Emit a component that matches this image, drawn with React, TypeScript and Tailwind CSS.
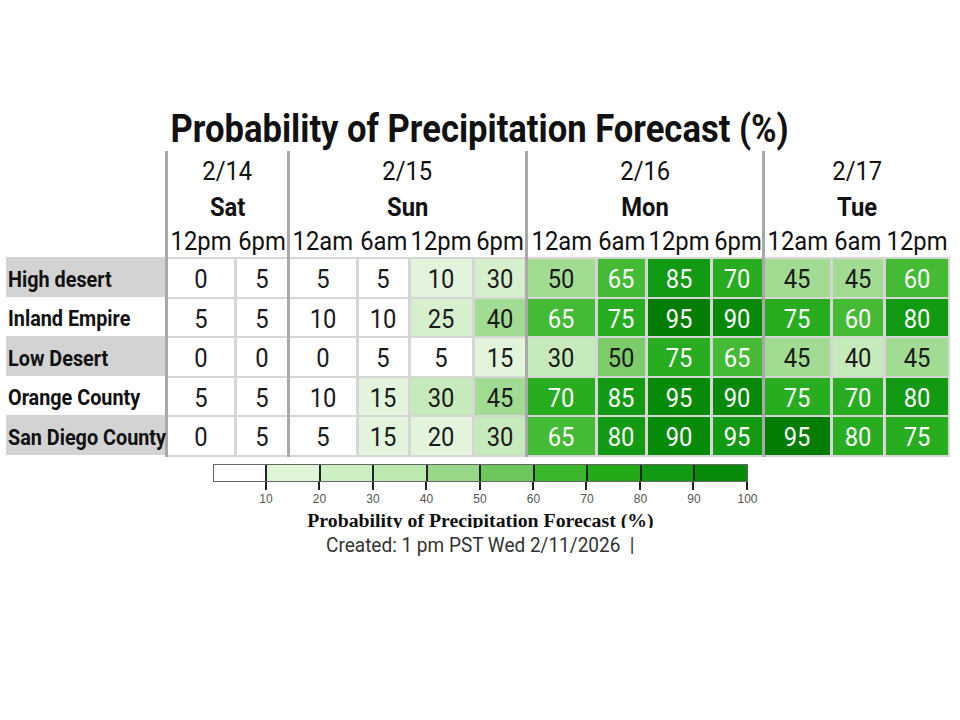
import React from "react";

const groups = [
  {
    date: "2/14",
    day: "Sat",
    cols: [
      { t: "12pm", w: "w-[66px]" },
      { t: "6pm", w: "w-[50px]" },
    ],
  },
  {
    date: "2/15",
    day: "Sun",
    cols: [
      { t: "12am", w: "w-[66px]" },
      { t: "6am", w: "w-[49px]" },
      { t: "12pm", w: "w-[61px]" },
      { t: "6pm", w: "w-[50px]" },
    ],
  },
  {
    date: "2/16",
    day: "Mon",
    cols: [
      { t: "12am", w: "w-[67px]" },
      { t: "6am", w: "w-[47px]" },
      { t: "12pm", w: "w-[62px]" },
      { t: "6pm", w: "w-[49px]" },
    ],
  },
  {
    date: "2/17",
    day: "Tue",
    cols: [
      { t: "12am", w: "w-[65px]" },
      { t: "6am", w: "w-[50px]" },
      { t: "12pm", w: "w-[62px]" },
    ],
  },
];

// shade keys -> cell colours
const shade: Record<string, string> = {
  w: "bg-white text-[#1a1a1a]",
  a: "bg-[#e2f5dc] text-[#1a1a1a]",
  b: "bg-[#d6f0ce] text-[#1a1a1a]",
  c: "bg-[#c6eabb] text-[#1a1a1a]",
  d: "bg-[#a2dc93] text-[#1a1a1a]",
  e: "bg-[#7ccd6a] text-[#1a1a1a]",
  f: "bg-[#44ba35] text-white",
  g: "bg-[#27ad1f] text-white",
  h: "bg-[#129a12] text-white",
  i: "bg-[#078a07] text-white",
  j: "bg-[#037d03] text-white",
};

const rows = [
  { name: "High desert", gray: true, v: ["0w 5w", "5w 5w 10a 30b", "50d 65f 85h 70g", "45d 45d 60f"] },
  { name: "Inland Empire", gray: false, v: ["5w 5w", "10w 10w 25b 40d", "65f 75g 95j 90i", "75g 60f 80h"] },
  { name: "Low Desert", gray: true, v: ["0w 0w", "0w 5w 5w 15a", "30c 50e 75g 65f", "45d 40c 45d"] },
  { name: "Orange County", gray: false, v: ["5w 5w", "10w 15a 30c 45d", "70g 85h 95i 90i", "75g 70g 80h"] },
  { name: "San Diego County", gray: true, v: ["0w 5w", "5w 15a 20a 30c", "65f 80h 90i 95h", "95j 80g 75g"] },
];

const bar = [
  "bg-white",
  "bg-[#dff5d8]",
  "bg-[#cdeec3]",
  "bg-[#bde8b0]",
  "bg-[#97d888]",
  "bg-[#6cc85a]",
  "bg-[#3cb72c]",
  "bg-[#22aa18]",
  "bg-[#129a12]",
  "bg-[#078a07]",
];

const sx = "inline-block scale-x-[0.95]";

export default function App() {
  return (
    <div className="w-[960px] h-[720px] bg-white font-[Roboto,sans-serif] text-[#111]">
      <div className="pt-[107px] text-center">
        <span className="inline-block scale-x-[0.91] text-[38px] font-bold leading-[44px]">
          Probability of Precipitation Forecast (%)
        </span>
      </div>

      <div className="flex pl-[6px]">
        {/* row labels */}
        <div className="w-[159px] flex flex-col">
          <div className="h-[106px]" />
          {rows.map((r) => (
            <div
              key={r.name}
              className={`h-[39.5px] flex items-center pl-[2px] pt-[6px] ${r.gray ? "bg-[#d3d3d3]" : "bg-white"}`}
            >
              <span className="inline-block scale-x-[0.9] origin-left whitespace-nowrap text-[22px] font-bold leading-none">
                {r.name}
              </span>
            </div>
          ))}
        </div>

        {groups.map((g, gi) => (
          <div key={g.date} className="flex">
            <div className="w-[3px] bg-[#a9a9a9]" />
            <div className="flex flex-col">
              <div className="h-[40px] flex items-center justify-center text-[25px] leading-none">
                <span className={sx}>{g.date}</span>
              </div>
              <div className="h-[33px] flex items-center justify-center text-[25px] font-bold leading-none">
                <span className={sx}>{g.day}</span>
              </div>
              <div className="h-[33px] pt-[2px] flex gap-[3px] text-[25px] leading-none">
                {g.cols.map((c, ci) => (
                  <div key={ci} className={`${c.w} flex items-center justify-center whitespace-nowrap`}>
                    <span className={sx}>{c.t}</span>
                  </div>
                ))}
              </div>
              <div className={`bg-[#d6d6d6] py-[2px] flex flex-col gap-[2px] ${gi === 3 ? "pr-[2px]" : ""}`}>
                {rows.map((r) => (
                  <div key={r.name} className="flex gap-[3px]">
                    {r.v[gi].split(" ").map((cell, ci) => {
                      const val = cell.slice(0, -1);
                      const k = cell.slice(-1);
                      return (
                        <div
                          key={ci}
                          className={`${g.cols[ci].w} h-[37.5px] pt-[4px] flex items-center justify-center text-[25px] leading-none ${shade[k]}`}
                        >
                          <span className={sx}>{val}</span>
                        </div>
                      );
                    })}
                  </div>
                ))}
              </div>
            </div>
          </div>
        ))}
      </div>

      {/* colour bar legend */}
      <div className="mx-auto mt-[7.5px] w-[535px]">
        <div className="flex h-[18px] border border-[#666]">
          {bar.map((b, i) => (
            <div key={i} className={`flex-1 ${b} ${i < 9 ? "border-r-2 border-[#222]" : ""}`} />
          ))}
        </div>
        <div className="flex h-[8px] pl-[1px]">
          {bar.map((_, i) => (
            <div key={i} className="flex-1 border-r-2 border-[#222]" />
          ))}
        </div>
        <div className="mt-[2px] flex font-['Liberation_Sans',sans-serif] text-[12px] leading-[15px] text-[#555]">
          {bar.map((_, i) => (
            <div key={i} className="flex-1 text-right">
              <span className="inline-block translate-x-1/2">{(i + 1) * 10}</span>
            </div>
          ))}
        </div>
      </div>
      <div className="mt-[7px] h-[14px] overflow-hidden text-center font-['Liberation_Serif',serif] text-[18px] font-bold leading-[14px] text-[#111]">
        <span className="inline-block scale-x-[1.1]">Probability of Precipitation Forecast (%)</span>
      </div>
      <div className="mt-[4.5px] text-center text-[20px] leading-[24px] text-[#333]">
        <span className="inline-block scale-x-[0.95]">Created: 1 pm PST Wed 2/11/2026&nbsp; |</span>
      </div>
    </div>
  );
}
